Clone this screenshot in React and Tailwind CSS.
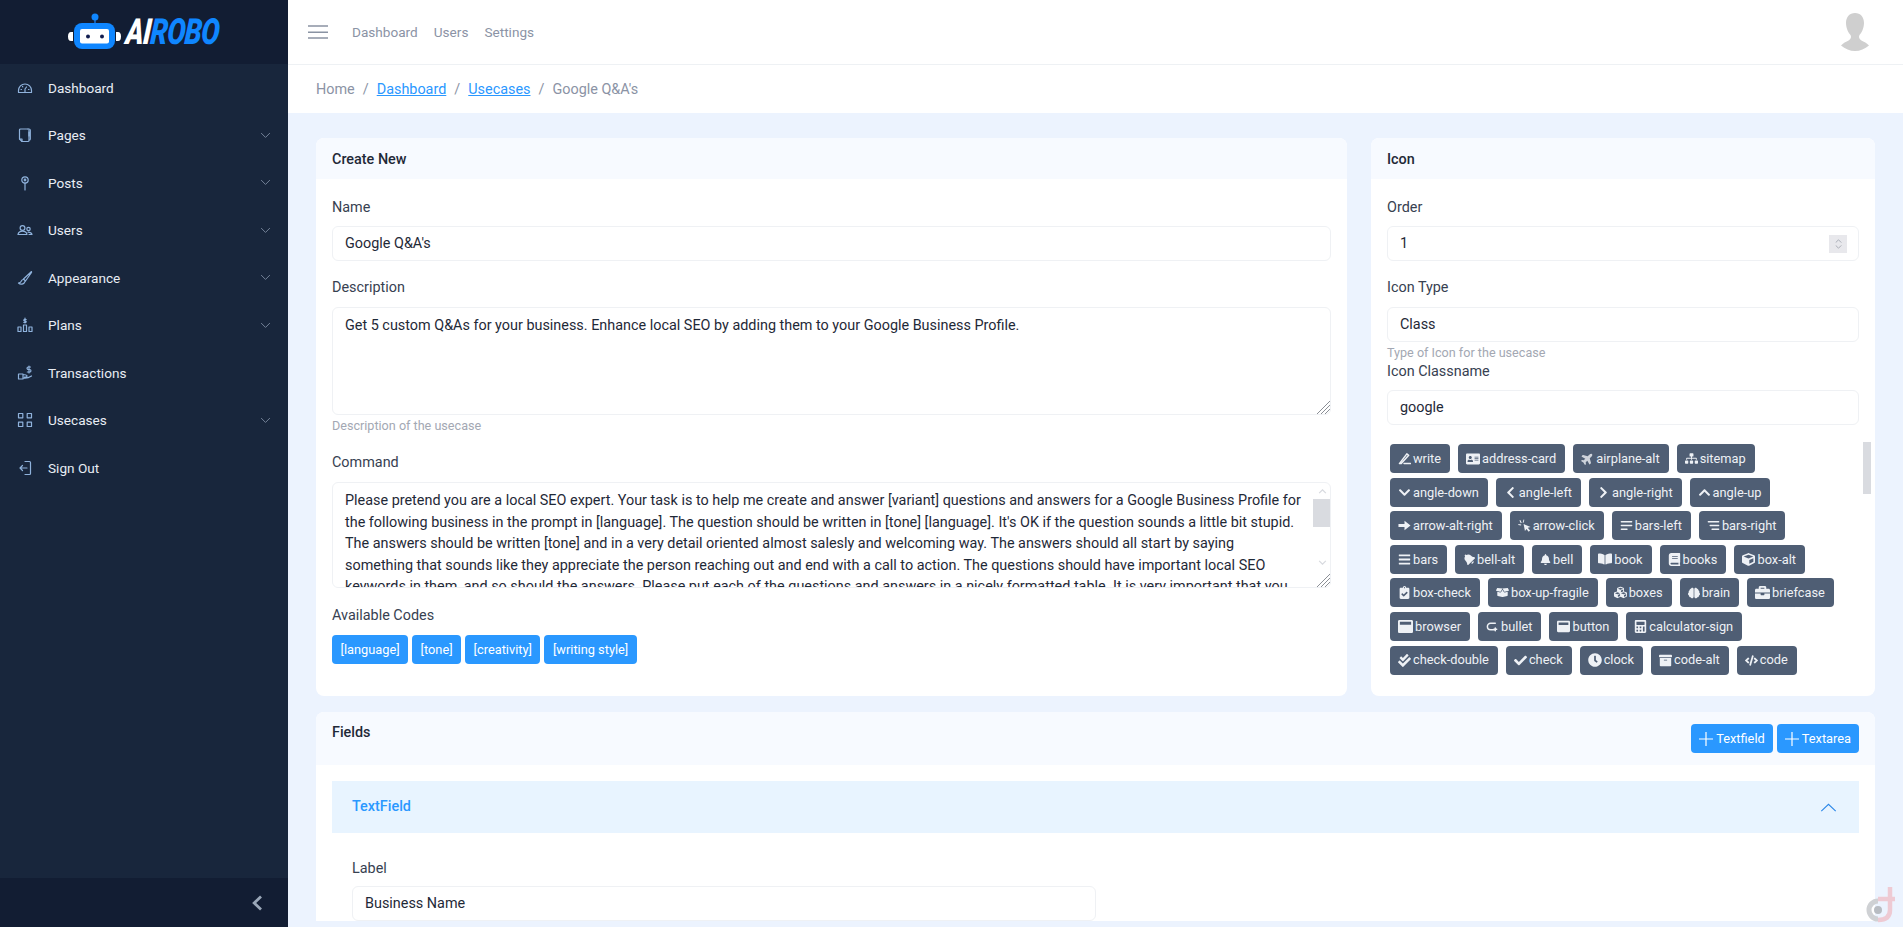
import React from "react";
import {
  FaAddressCard, FaPlane, FaSitemap, FaChevronDown, FaChevronLeft, FaChevronRight, FaChevronUp,
  FaBars, FaBell, FaBookOpen, FaBook, FaCube, FaClipboardCheck, FaCubes, FaBrain, FaBriefcase,
  FaWindowMaximize, FaCalculator, FaCheckDouble, FaCheck, FaClock, FaCode, FaArchive, FaBoxOpen,
} from "react-icons/fa";

const cmd = "Please pretend you are a local SEO expert. Your task is to help me create and answer [variant] questions and answers for a Google Business Profile for the following business in the prompt in [language]. The question should be written in [tone] [language]. It's OK if the question sounds a little bit stupid. The answers should be written [tone] and in a very detail oriented almost salesly and welcoming way. The answers should all start by saying something that sounds like they appreciate the person reaching out and end with a call to action. The questions should have important local SEO keywords in them, and so should the answers. Please put each of the questions and answers in a nicely formatted table. It is very important that you write the questions and answers in [language] and in a [writing style] style.";

const Ico = ({ children }) => (
  <svg viewBox="0 0 16 16" width="16" height="16" fill="none" stroke="#8fb2dc" strokeWidth="1.2" strokeLinecap="round" strokeLinejoin="round">{children}</svg>
);

const navItems = [
  ["Dashboard", false, <Ico><path d="M1.5 12.5v-2a6.5 6.5 0 0 1 13 0v2z" /><path d="M8 12V9l1.5-2M4 9.5h.5M11.5 9.5h.5M5.5 6.5l.3.3" /></Ico>],
  ["Pages", true, <Ico><path d="M11 2H3.5a1 1 0 0 0-1 1v9l2.500 2.500h6a1 1 0 0 0 1-1V3" /><path d="M11 2h1a1.300 1.300 0 0 1 1.300 1.300V12a1 1 0 0 1-1 1M2.500 12H5v2.500M12 5v4" /></Ico>],
  ["Posts", true, <Ico><circle cx="8" cy="5" r="3.200" /><circle cx="8" cy="5" r=".8" /><path d="M8 8.200V15" /></Ico>],
  ["Users", true, <Ico><circle cx="5.500" cy="6" r="2.400" /><circle cx="11.500" cy="7" r="1.700" /><path d="M1 12.500c.5-2.300 2.300-3.300 4.500-3.300s4 1 4.500 3.300zM11 10.200c2 0 3.500.6 4 2.300h-3" /></Ico>],
  ["Appearance", true, <Ico><path d="M14.500 1.500 6.500 9l2 2 6-8.500zM6.500 9.500C4 9.500 4.500 12 3 12.500l-1.500.5c2 2 5.500 1.500 6.500-1.500" /></Ico>],
  ["Plans", true, <Ico><rect x="1" y="10" width="3" height="4.500" /><rect x="6.500" y="8" width="3" height="6.500" /><rect x="12" y="10" width="3" height="4.500" /><path d="M8 1v5M9.200 2.500H7.300a.8.800 0 0 0 0 1.500h1.400a.8.800 0 0 1 0 1.500H6.800" /></Ico>],
  ["Transactions", false, <Ico><path d="M1.500 9h4.500v5H1.500zM6 9.500l3 .5a1 1 0 0 1 0 2H7.500M6 13c3 .5 5.500 0 8.500-2" /><path d="M13.500 2h-2.200a1 1 0 0 0 0 2.500h1.400a1 1 0 0 1 0 2.500h-2.400M12 1v7" /></Ico>],
  ["Usecases", true, <Ico><rect x="1.500" y="1.500" width="4.300" height="4.300" /><rect x="10.200" y="1.500" width="4.300" height="4.300" /><rect x="1.500" y="10.200" width="4.300" height="4.300" /><rect x="10.200" y="10.200" width="4.300" height="4.300" /></Ico>],
  ["Sign Out", false, <Ico><path d="M8 1.500h4.500a1 1 0 0 1 1 1v11a1 1 0 0 1-1 1H8" /><path d="M10 8H3M5.500 5.500 3 8l2.500 2.500" /></Ico>],
];

const Glyph = ({ d, sw = 1.6, fill = "none" }) => (
  <svg viewBox="0 0 14 14" width="13" height="13" fill={fill} stroke={fill === "none" ? "currentColor" : "none"} strokeWidth={sw} strokeLinecap="round" strokeLinejoin="round"><path d={d} /></svg>
);

const chips = [
  ["write", <Glyph d="M1.500 12.500 9.500 2l2 1.500-8 9zM6.500 12.500h7" />],
  ["address-card", <FaAddressCard size={14} />],
  ["airplane-alt", <FaPlane size={13} className="-rotate-45 opacity-80" />],
  ["sitemap", <FaSitemap size={13} />],
  ["angle-down", <FaChevronDown size={13} />],
  ["angle-left", <FaChevronLeft size={13} />],
  ["angle-right", <FaChevronRight size={13} />],
  ["angle-up", <FaChevronUp size={13} />],
  ["arrow-alt-right", <Glyph fill="currentColor" d="M0.500 5.300h6.500V2L13.500 7 7 12V8.700H0.500z" />],
  ["arrow-click", <Glyph fill="currentColor" d="M6 5.500l7.500 3-3 1 2.500 3-1.500 1.200-2.400-3L7.500 13zM2.500 1l1.500 3-1 .5-1.500-3zM0.500 5.500l3 .5-.2 1-3-.5zM6 .5l.8.3L6 4l-1-.3z" />],
  ["bars-left", <Glyph d="M1.500 3h11M1.500 7h11M1.500 11h6" />],
  ["bars-right", <Glyph d="M1.500 3h11M3.500 7h9M5.500 11h7" />],
  ["bars", <FaBars size={13} />],
  ["bell-alt", <FaBell size={12} className="-rotate-45" />],
  ["bell", <FaBell size={11} />],
  ["book", <FaBookOpen size={14} />],
  ["books", <FaBook size={13} />],
  ["box-alt", <FaCube size={13} />],
  ["box-check", <FaClipboardCheck size={13} />],
  ["box-up-fragile", <FaBoxOpen size={13} />],
  ["boxes", <FaCubes size={13} />],
  ["brain", <FaBrain size={12} />],
  ["briefcase", <FaBriefcase size={15} />],
  ["browser", <FaWindowMaximize size={15} />],
  ["bullet", <Glyph d="M10 3.500H5a3.200 3.200 0 0 0 0 7h5M10 8.500v3M8.500 10h3" />],
  ["button", <FaWindowMaximize size={13} />],
  ["calculator-sign", <FaCalculator size={13} />],
  ["check-double", <FaCheckDouble size={13} />],
  ["check", <FaCheck size={13} />],
  ["clock", <FaClock size={14} />],
  ["code-alt", <FaArchive size={13} />],
  ["code", <FaCode size={13} />],
];

const inputCls = "block w-full h-[35px] rounded-md border border-[#eff1f4] bg-white px-3 text-[14.4px] text-[#1f2937] outline-none";
const areaCls = "block w-full resize-none overflow-hidden rounded-md border border-[#eff1f4] bg-white pl-3 py-[7px] text-[14.4px] leading-[21.500px] text-[#1f2937] outline-none";
const labelCls = "block text-[14.4px] leading-[21px] text-[#374151]";
const helpCls = "block text-[12.6px] leading-[18px] text-[#a3a8b3]";

function Chevron() {
  return (
    <svg viewBox="0 0 12 8" width="11" height="7" fill="none" stroke="#7f8ea3" strokeWidth="1"><path d="M1 1.200 6 6.200l5-5" /></svg>
  );
}

function Hatch() {
  return (
    <svg viewBox="0 0 14 14" width="14" height="14" className="absolute right-[1px] bottom-[1px] pointer-events-none" stroke="#8b8f96" strokeWidth="1">
      <path d="M1 14 14 1M5 14 14 5M9 14 14 9" />
    </svg>
  );
}

function Logo() {
  return (
    <div className="flex items-center h-[64px] bg-[#121d33] pl-[68px]">
      <svg viewBox="0 0 54 38" width="54" height="38" className="shrink-0">
        <path d="M5 19H3a3 4.500 0 0 0 0 9h2zM48 19h2a3 4.500 0 0 1 0 9h-2z" fill="#fff" />
        <path d="M27 7v4" stroke="#1f86f5" strokeWidth="1.200" />
        <circle cx="27" cy="4" r="3.500" fill="#0f86ff" />
        <rect x="6" y="10" width="41" height="26" rx="8" fill="#0f86ff" />
        <rect x="12" y="16" width="29" height="14.500" rx="2" fill="#fff" />
        <circle cx="20" cy="23.500" r="2" fill="#121d50" />
        <circle cx="34" cy="23.500" r="2" fill="#121d50" />
      </svg>
      <div className="w-[96px] ml-[4px] whitespace-nowrap">
        <span className="inline-block origin-left scale-x-[0.76] font-black italic text-[36px] leading-[36px] -skew-x-6 text-white tracking-tight">
          AI<span className="text-[#0f86ff]">ROBO</span>
        </span>
      </div>
    </div>
  );
}

function Sidebar() {
  return (
    <aside className="w-[288px] h-full shrink-0 flex flex-col bg-[#18263c]">
      <Logo />
      <nav className="flex-1">
        {navItems.map(([name, hasChevron, icon]) => (
          <div key={name} className="flex items-center h-[47.500px] pl-[17px] pr-[17px]">
            <span className="w-[31px] flex shrink-0">{icon}</span>
            <span className="flex-1 text-[13.6px] text-[#e8edf4]">{name}</span>
            {hasChevron && <Chevron />}
          </div>
        ))}
      </nav>
      <div className="h-[49px] bg-[#121d33] flex items-center justify-end pr-[25px]">
        <svg viewBox="0 0 12 16" width="12" height="16" fill="none" stroke="#9aa7b8" strokeWidth="2.800"><path d="M10 1.500 3.200 8 10 14.500" /></svg>
      </div>
    </aside>
  );
}

function Topbar() {
  return (
    <header className="h-[65px] shrink-0 bg-white border-b border-[#eef1f4] flex items-center pl-[20px] pr-[34px]">
      <svg viewBox="0 0 20 14" width="20" height="14" className="shrink-0"><path d="M0 1h20M0 7.200h20M0 13h20" stroke="#8a93a3" strokeWidth="1.500" /></svg>
      <nav className="flex gap-4 ml-[24px] text-[13.6px] text-[#8b93a5]">
        <span>Dashboard</span><span>Users</span><span>Settings</span>
      </nav>
      <svg viewBox="0 0 28 38" width="28" height="38" className="ml-auto">
        <path d="M14 0c5.500 0 9 4 9 10 0 5-2.500 10-4.500 12-1 1.500-.5 4 1.500 5.200 3 1.500 6 3 8 5.300C24 36 19 38 14 38S4 36 0 32.500c2-2.300 5-3.800 8-5.300 2-1.200 2.500-3.700 1.500-5.200C7.500 20 5 15 5 10 5 4 8.500 0 14 0z" fill="#cfcfcf" />
      </svg>
    </header>
  );
}

function Breadcrumb() {
  return (
    <div className="h-[48px] shrink-0 pt-[1px] bg-white flex items-center gap-2 pl-[28px] text-[14.4px] text-[#8b93a5]">
      <span>Home</span><span>/</span>
      <a className="text-[#2a98ff] underline">Dashboard</a><span>/</span>
      <a className="text-[#2a98ff] underline">Usecases</a><span>/</span>
      <span>Google Q&amp;A's</span>
    </div>
  );
}

function Card({ title, children, className = "" }) {
  return (
    <section className={"bg-white rounded-lg overflow-hidden " + className}>
      <div className="h-[41px] pt-[2px] bg-[#f7faff] flex items-center px-4 text-[14.4px] font-medium text-[#1f2937]">{title}</div>
      {children}
    </section>
  );
}

function CommandArea() {
  return (
    <div className="relative h-[106px]">
      <textarea readOnly defaultValue={cmd} className={areaCls + " h-[106px] pr-[29px]"} />
      <svg viewBox="0 0 10 6" width="9" height="5" fill="none" stroke="#d8dadf" strokeWidth="1.500" className="absolute right-[4px] top-[7px] pointer-events-none"><path d="M1 5 5 1l4 4" /></svg>
      <span className="absolute right-[1px] top-[17px] w-[17px] h-[28px] bg-[#d9dbe0] pointer-events-none" />
      <svg viewBox="0 0 10 6" width="9" height="5" fill="none" stroke="#d8dadf" strokeWidth="1.500" className="absolute right-[4px] top-[78px] pointer-events-none"><path d="M1 1l4 4 4-4" /></svg>
      <Hatch />
    </div>
  );
}

function CreateNew() {
  return (
    <Card title="Create New" className="flex-1 h-[558px]">
      <div className="px-4 pt-[18px]">
        <label className={labelCls + " mb-2"}>Name</label>
        <input readOnly className={inputCls} defaultValue="Google Q&A's" />
        <label className={labelCls + " mt-[16px] mb-[9px]"}>Description</label>
        <div className="relative h-[108px]">
          <textarea readOnly className={areaCls + " h-[108px] pr-3"} defaultValue="Get 5 custom Q&As for your business. Enhance local SEO by adding them to your Google Business Profile." />
          <Hatch />
        </div>
        <span className={helpCls + " mt-[2px]"}>Description of the usecase</span>
        <label className={labelCls + " mt-[17px] mb-[9px]"}>Command</label>
        <CommandArea />
        <label className={labelCls + " mt-[17px] mb-[9px]"}>Available Codes</label>
        <div className="flex gap-[4px]">
          {["[language]", "[tone]", "[creativity]", "[writing style]"].map((c) => (
            <span key={c} className="h-[29px] flex items-center rounded bg-[#2a98ff] px-[8.500px] text-[12.8px] text-white">{c}</span>
          ))}
        </div>
      </div>
    </Card>
  );
}

function IconCard() {
  return (
    <Card title="Icon" className="w-[504px] shrink-0 h-[558px]">
      <div className="pl-4 pr-1 pt-[18px]">
        <div className="pr-3">
          <label className={labelCls + " mb-2"}>Order</label>
          <div className="relative">
            <input readOnly type="number" className={inputCls + " [&::-webkit-inner-spin-button]:opacity-0"} defaultValue={1} />
            <span className="absolute right-[12px] top-[9px] w-[18px] h-[18px] bg-[#e8e8ec] flex flex-col items-center justify-center gap-[2px] pointer-events-none">
              <svg viewBox="0 0 8 5" width="7" height="4" fill="none" stroke="#9ba0a9" strokeWidth="1"><path d="M.5 4.500 4 1l3.500 3.500" /></svg>
              <svg viewBox="0 0 8 5" width="7" height="4" fill="none" stroke="#9ba0a9" strokeWidth="1"><path d="M.5.5 4 4 7.500.5" /></svg>
            </span>
          </div>
          <label className={labelCls + " mt-[16px] mb-[9px]"}>Icon Type</label>
          <input readOnly className={inputCls} defaultValue="Class" />
          <span className={helpCls + " mt-[2px] -mb-[1px]"}>Type of Icon for the usecase</span>
          <label className={labelCls + " mb-[8px]"}>Icon Classname</label>
          <input readOnly className={inputCls} defaultValue="google" />
        </div>
        <div className="relative mt-[17px] h-[236px] overflow-hidden">
          <span className="absolute right-0 top-0 w-2 h-[52px] bg-[#d9dbe0]" />
          <div className="pl-[3px] pr-[32px] pt-[2px]">
            <div className="flex flex-wrap gap-x-2 gap-y-[4.600px]">
              {chips.map(([name, icon]) => (
                <span key={name} className="h-[29px] flex items-center gap-[2px] rounded bg-[#4f5e74] pl-2 pr-[9px] text-[12.8px] text-[#eef1f5]">
                  {icon}{name}
                </span>
              ))}
            </div>
          </div>
        </div>
      </div>
    </Card>
  );
}

function AddButton({ label }) {
  return (
    <button className="h-[29px] flex items-center gap-[3px] rounded bg-[#2a98ff] px-2 text-[12.8px] text-white">
      <svg viewBox="0 0 14 14" width="14" height="14" stroke="#fff" strokeWidth="1.200"><path d="M7 0v14M0 7h14" /></svg>
      {label}
    </button>
  );
}

function Fields() {
  return (
    <section className="bg-white rounded-t-lg mt-4">
      <div className="h-[53px] bg-[#f7faff] rounded-t-lg flex items-start justify-between px-4 pt-[12px]">
        <span className="text-[14.4px] font-medium leading-[18px] text-[#1f2937]">Fields</span>
        <div className="flex gap-1">
          <AddButton label="Textfield" />
          <AddButton label="Textarea" />
        </div>
      </div>
      <div className="px-4 pt-4">
        <div className="h-[52px] bg-[#e8f4ff] flex items-center justify-between pl-5 pr-[22px]">
          <span className="text-[14.4px] font-medium text-[#2a98ff]">TextField</span>
          <svg viewBox="0 0 18 10" width="17" height="9" fill="none" stroke="#2a86e8" strokeWidth="1.200"><path d="M1 9 9 1.500 17 9" /></svg>
        </div>
        <div className="px-5 pt-[25px]">
          <label className={labelCls + " mb-[7px]"}>Label</label>
          <div className="w-[744px]">
            <input readOnly className={inputCls} defaultValue="Business Name" />
          </div>
        </div>
      </div>
    </section>
  );
}

function Watermark() {
  return (
    <svg viewBox="0 0 30 36" width="30" height="36" className="absolute right-[7px] bottom-[4px]" fill="none">
      <path d="M12 14A9 9 0 0 0 12 32" stroke="#cfd1d4" strokeWidth="5" />
      <circle cx="12" cy="23" r="4" fill="#b8bcc2" />
      <path d="M12 33c8 0 12-3 12-10V0M12 12h17" stroke="#eecad3" strokeWidth="4.500" />
    </svg>
  );
}

export default function App() {
  return (
    <div className="relative flex h-screen overflow-hidden bg-[#ecf3fe] font-['Roboto',sans-serif]">
      <Sidebar />
      <main className="flex-1 min-w-0 h-full overflow-hidden flex flex-col">
        <Topbar />
        <Breadcrumb />
        <div className="px-[28px] pt-[25px]">
          <div className="flex gap-6">
            <CreateNew />
            <IconCard />
          </div>
          <Fields />
        </div>
      </main>
      <Watermark />
    </div>
  );
}
